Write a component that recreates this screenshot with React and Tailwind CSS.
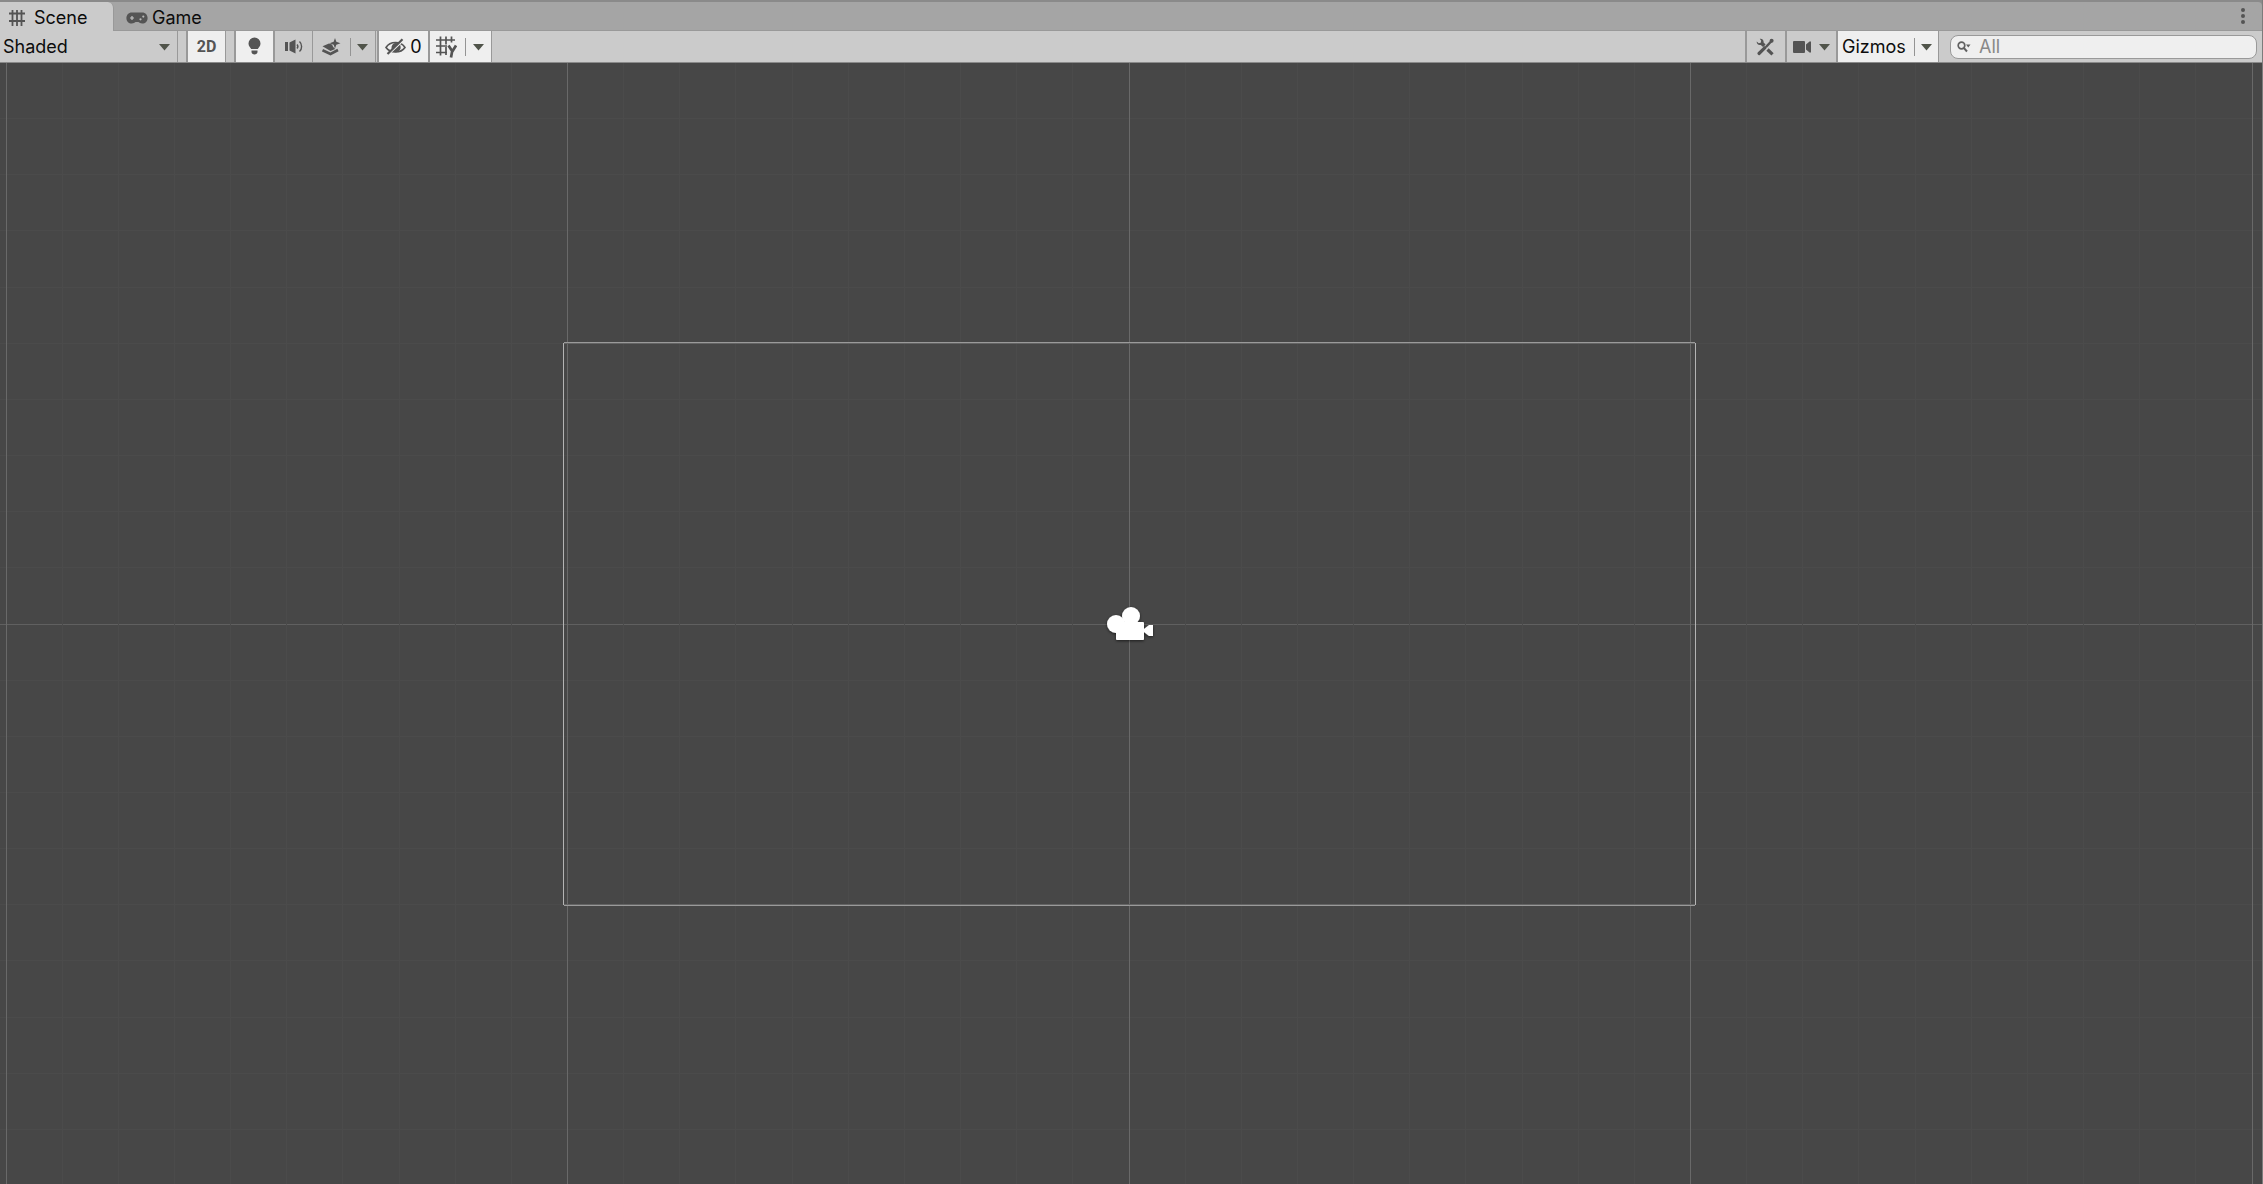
const FG = '#545454';

function Caret() {
  return (
    <svg width="12" height="8" viewBox="0 0 12 8" className="shrink-0" aria-hidden="true">
      <path d="M0 1h11L5.500 7.500z" fill="#50544a" />
    </svg>
  );
}

function HashIcon() {
  return (
    <svg width="18" height="18" viewBox="0 0 18 18" fill="none" stroke={FG} strokeWidth="1.8" aria-hidden="true">
      <path d="M4.5 1v16M9 1v16M13.5 1v16M1 4.500h16M1 12h16" />
    </svg>
  );
}

function GamepadIcon() {
  return (
    <svg width="22" height="12" viewBox="0 0 22 12" aria-hidden="true">
      <path
        fill={FG}
        d="M5.8 0.4C2.6 0.4 0.4 2.8 0.4 6s2.200 5.600 5.400 5.600c1.800 0 2.800-1 3.700-1.500h3c0.900 0.500 1.900 1.500 3.700 1.500 3.200 0 5.400-2.400 5.400-5.600S19.400 0.400 16.200 0.400z"
      />
      <path d="M6 4v4M4 6h4" stroke="#c2c2c2" strokeWidth="1.200" />
      <circle cx="14.500" cy="7.300" r="1.100" fill="#b8b8b8" />
      <circle cx="17.300" cy="4.600" r="1.100" fill="#b8b8b8" />
    </svg>
  );
}

function BulbIcon() {
  return (
    <svg width="14" height="20" viewBox="0 0 14 20" fill={FG} aria-hidden="true">
      <path d="M6.500 0.500a6 6 0 0 1 6 6c0 2.600-1.600 3.900-2.700 5.400H3.200C2.100 10.400 0.500 9.100 0.500 6.500a6 6 0 0 1 6-6z" />
      <path d="M3.500 13.500h6v1.500c0 1.500-1.400 2.500-3 2.500s-3-1-3-2.500z" />
    </svg>
  );
}

function SpeakerIcon() {
  return (
    <svg width="20" height="16" viewBox="0 0 20 16" aria-hidden="true">
      <path fill={FG} d="M1 3h3v9H1zM5.500 3.500L11.500 0.500v14l-6-3z" />
      <path d="M13 5.500a3 3 0 0 1 0 4M15.500 2.500c2.800 2.500 2.800 7.500 0 10" fill="none" stroke={FG} strokeWidth="1.400" />
    </svg>
  );
}

function LayersIcon() {
  return (
    <svg width="20" height="18" viewBox="0 0 20 18" aria-hidden="true">
      <path fill={FG} d="M0.500 8.300L7 5.500l3 1 1.200 2.500 2 2L8.500 13z" />
      <path d="M0.500 12.200l8 3.800 7.500-4" fill="none" stroke={FG} strokeWidth="2.600" />
      <path fill={FG} d="M13 0l1.300 3.700 4.200 1.600-4.200 1.500-1.300 3.700-1.300-3.700L7.500 5.300l4.200-1.600z" />
    </svg>
  );
}

function EyeOffIcon() {
  return (
    <svg width="21" height="18" viewBox="0 0 21 18" aria-hidden="true">
      <path d="M1 9.500C5.200 2.800 15.800 2.800 20 9.500 15.800 15.500 5.200 15.500 1 9.500z" fill="none" stroke={FG} strokeWidth="1.600" />
      <path d="M14 5.500a4.600 4.600 0 0 1-6.500 7.500L6.500 10A4.500 4.500 0 0 1 11 5z" fill={FG} />
      <path d="M3.500 16.500L19 2" stroke="#efefef" strokeWidth="1.500" />
      <path d="M2.500 16L17.500 1.200" stroke={FG} strokeWidth="2.200" />
    </svg>
  );
}

function GridAxisIcon() {
  return (
    <svg width="21" height="22" viewBox="0 0 21 22" fill="none" stroke={FG} aria-hidden="true">
      <path d="M4.500 0.500v19M10 0.500v8M10 11v8M15.500 0.500v6M0 4h19M0 10h11M0 16.500h11" strokeWidth="1.700" />
      <path d="M12.500 9.500l4.300 6.500M20 9.500l-4 6.500-1 5.500" strokeWidth="2.700" />
    </svg>
  );
}

function ToolsIcon() {
  return (
    <svg width="18" height="18" viewBox="0 0 18 18" aria-hidden="true">
      <path
        fill={FG}
        d="M3.800 0.800C5.800 0.200 8 2 7.600 4.600l2 2-2.500 2.500-2.300-2.200C2.500 7.500 0.400 5.800 0.700 3.600l2 1.700 2-0.600 0.500-2z"
      />
      <path d="M11.500 11.500l5 4.800" stroke={FG} strokeWidth="3.200" />
      <path d="M3 15.500l6-5.800" stroke={FG} strokeWidth="3.200" strokeLinecap="round" />
      <path d="M10 9l6-6.500" stroke={FG} strokeWidth="2.400" />
      <circle cx="15.600" cy="2.800" r="2" fill={FG} />
    </svg>
  );
}

function VideoIcon() {
  return (
    <svg width="18" height="12" viewBox="0 0 18 12" fill={FG} aria-hidden="true">
      <rect width="12" height="12" rx="1" />
      <path d="M13 3.500L16.500 0.500H18v11h-1.500L13 8.500z" />
    </svg>
  );
}

function SearchIcon() {
  return (
    <svg width="14" height="12" viewBox="0 0 14 12" aria-hidden="true">
      <circle cx="4.500" cy="4.500" r="3.300" fill="none" stroke="#606060" strokeWidth="1.700" />
      <path d="M6.800 6.800L10 10.500" stroke="#606060" strokeWidth="2" />
      <path d="M9 3.500h4.500l-2.250 3z" fill="#606060" />
    </svg>
  );
}

const columns = Array.from({ length: 41 }, (_, i) => ({ at: Math.floor(6 + i * 56.15), major: i % 10 === 0 }));
const rows = Array.from({ length: 20 }, (_, i) => ({ at: Math.floor(562 + (i - 10) * 56.15), major: i === 10 }));

function SceneCanvas() {
  return (
    <svg
      className="h-full w-full"
      viewBox="0 1 2262 1121"
      preserveAspectRatio="xMidYMid slice"
      role="img"
      aria-label="Scene view with main camera"
    >
      <defs>
        <filter id="shadow" x="-20%" y="-20%" width="140%" height="150%">
          <feDropShadow dx="0" dy="1" stdDeviation="1.5" floodColor="#000" floodOpacity="0.6" />
        </filter>
      </defs>
      {rows.map((r) => (
        <rect key={r.at} x="0" y={r.at} width="2263" height="1" fill={r.major ? '#606060' : '#4b4b4b'} />
      ))}
      {columns.map((c) => (
        <rect key={c.at} x={c.at} y="0" width="1" height="1122" fill={c.major ? '#696969' : '#4b4b4b'} />
      ))}
      <rect x="564" y="280" width="1131" height="1" fill="#9a9a9a" />
      <rect x="564" y="281" width="1131" height="1" fill="#646464" />
      <rect x="564" y="842" width="1131" height="1" fill="#646464" />
      <rect x="564" y="843" width="1131" height="1" fill="#9a9a9a" />
      <rect x="563" y="281" width="1" height="562" fill="#b4b4b4" />
      <rect x="1695" y="281" width="1" height="562" fill="#b4b4b4" />
      <g fill="#fff" filter="url(#shadow)">
        <circle cx="1116" cy="562" r="9" />
        <circle cx="1131" cy="554" r="9" />
        <rect x="1116" y="560" width="28" height="18" rx="1" />
        <path d="M1144 567l5-4h4v11h-4l-5-4z" />
      </g>
    </svg>
  );
}

const on = 'bg-[#efefef]';
const cell = 'flex h-full shrink-0 items-center';

function Separator() {
  return <span className="h-[18px] w-px shrink-0 bg-[#949494]" />;
}

export default function App() {
  return (
    <div className="flex h-screen flex-col overflow-hidden border-r border-[#7c7c7c] bg-[#474747] font-['Inter',sans-serif] text-[18px] leading-6 text-[#0c0c0c]">
      <header className="shrink-0 border-t-2 border-[#8a8a8a] bg-[#8a8a8a]">
        <div role="tablist" className="flex h-[29px] items-stretch rounded-tr bg-[#a5a5a5]">
          <button role="tab" aria-selected="true" className="flex w-[114px] items-center gap-2 rounded-tr-md border-r border-[#999] bg-[#cbcbcb] pt-0.5 pl-2">
            <HashIcon />
            Scene
          </button>
          <button role="tab" aria-selected="false" className="flex items-center gap-1 border-b border-[#999] pt-[3px] pr-4 pl-3">
            <GamepadIcon />
            Game
          </button>
          <div className="flex flex-1 items-center justify-end border-b border-[#999] pr-[11px]">
            <button aria-label="Tab options" className="flex h-full w-4 items-center justify-center">
              <svg width="4" height="16" viewBox="0 0 4 16" fill={FG} aria-hidden="true">
                <circle cx="2" cy="2" r="2" />
                <circle cx="2" cy="8" r="2" />
                <circle cx="2" cy="14" r="2" />
              </svg>
            </button>
          </div>
        </div>
      </header>

      <div role="toolbar" aria-label="Scene toolbar" className="flex h-8 shrink-0 items-stretch justify-between border-b border-[#8a8a8a] bg-[#cbcbcb]">
        <div className="flex items-stretch">
          <label className="grid w-[178px] items-center border-r border-[#999]">
            <select aria-label="Draw mode" className="col-start-1 row-start-1 h-full w-full appearance-none pl-[3px] outline-none">
              <option>Shaded</option>
            </select>
            <span className="pointer-events-none col-start-1 row-start-1 justify-self-end pr-1.5">
              <Caret />
            </span>
          </label>
          <button aria-pressed="true" className={`${cell} ${on} ml-2 w-10 justify-center border-r border-l-2 border-[#999] font-['Roboto',sans-serif] text-base font-bold text-[#545454]`}>
            2D
          </button>
          <button aria-pressed="true" aria-label="Lighting" className={`${cell} ${on} ml-2 w-[41px] justify-center border-x-2 border-[#999]`}>
            <BulbIcon />
          </button>
          <button aria-label="Audio" className={`${cell} w-[38px] justify-center border-r border-[#999]`}>
            <SpeakerIcon />
          </button>
          <div className={`${cell} w-[63px] border-r border-[#999]`}>
            <button aria-label="Effects" className="flex h-full w-[37px] items-center justify-center">
              <LayersIcon />
            </button>
            <Separator />
            <button aria-label="Effects menu" className="flex h-full flex-1 items-center justify-center">
              <Caret />
            </button>
          </div>
          <button aria-label="Hidden objects: 0" className={`${cell} ${on} ml-px w-[53px] justify-center gap-1 border-x-2 border-[#999]`}>
            <EyeOffIcon />
            0
          </button>
          <div className={`${cell} ${on} w-[62px] border-r border-[#999]`}>
            <button aria-label="Grid" className="flex h-full w-[35px] items-center pl-1.5">
              <GridAxisIcon />
            </button>
            <Separator />
            <button aria-label="Grid menu" className="flex h-full flex-1 items-center justify-center">
              <Caret />
            </button>
          </div>
        </div>

        <div className="flex items-stretch">
          <button aria-label="Component tools" className={`${cell} w-[42px] justify-center border-x-2 border-[#999] pr-0.5`}>
            <ToolsIcon />
          </button>
          <button aria-label="Scene camera" className={`${cell} w-[51px] justify-center gap-2 border-r-2 border-[#999]`}>
            <VideoIcon />
            <Caret />
          </button>
          <div className={`${cell} ${on} w-[101px] border-r border-[#999]`}>
            <button aria-pressed="true" className="h-full w-[76px] pl-1 text-left">Gizmos</button>
            <Separator />
            <button aria-label="Gizmos menu" className="flex h-full flex-1 items-center justify-center">
              <Caret />
            </button>
          </div>
          <label className="mr-[5px] ml-[11px] flex h-6 w-[307px] items-center gap-2 self-center rounded-lg border border-[#999] bg-[#efefef] px-1.5">
            <SearchIcon />
            <input type="text" aria-label="Search" placeholder="All" className="h-full min-w-0 flex-1 outline-none placeholder:text-[#888]" />
          </label>
        </div>
      </div>

      <main className="min-h-0 flex-1">
        <SceneCanvas />
      </main>
    </div>
  );
}
